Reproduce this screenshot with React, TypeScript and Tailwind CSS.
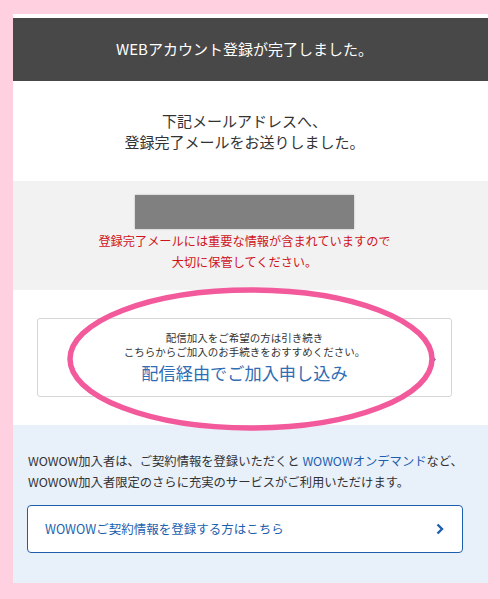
export default function App() {
  const jp = { fontFamily: '"Noto Sans CJK JP", "Noto Sans", sans-serif' };

  return (
    <div className="relative min-h-[599px] w-[500px] bg-[#ffd0df] px-[13px] pt-[14px]" style={jp}>
      <div className="w-[475px] bg-white pt-[4px]">
        {/* header */}
        <div className="flex h-[63px] items-center justify-center bg-[#484848] pr-[12px] text-[15px] text-white">
          WEBアカウント登録が完了しました。
        </div>

        {/* message */}
        <div className="flex h-[100px] flex-col items-center justify-center pr-[12px] text-[15px] leading-[21px] text-[#333]">
          <p>下記メールアドレスへ、</p>
          <p>登録完了メールをお送りしました。</p>
        </div>

        {/* address */}
        <div className="flex h-[109px] flex-col items-center bg-[#f2f2f2] pr-[12px] pt-[14px]">
          <div className="h-[34px] w-[219px] bg-[#808080] shadow-[0_0_2px_rgba(0,0,0,0.25)]" />
          <p className="mt-[2px] text-center text-[12.2px] leading-[21px] text-[#d0121b]">
            登録完了メールには重要な情報が含まれていますので
            <br />
            大切に保管してください。
          </p>
        </div>

        {/* streaming */}
        <div className="h-[135px] pt-[28px]">
          <div className="relative ml-[24px] flex h-[79px] w-[415px] flex-col items-center justify-center rounded-[3px] border border-[#d6d6d6] bg-white">
            <p className="text-center text-[10.5px] leading-[14px] text-[#333]">
              配信加入をご希望の方は引き続き
              <br />
              こちらからご加入のお手続きをおすすめください。
            </p>
            <p className="mt-[2px] text-[17.2px] leading-[24px] text-[#2f6db5]">配信経由でご加入申し込み</p>
            <svg className="absolute right-[15px] top-[36px]" width="6" height="9" viewBox="0 0 6 9">
              <path d="M1 1l3.5 3.5L1 8" fill="none" stroke="#2f6db5" strokeWidth="2" />
            </svg>
          </div>
        </div>

        {/* wowow */}
        <div className="h-[158px] bg-[#e8f0fa] pl-[15px] pt-[26px]">
          <p className="text-[12.3px] leading-[21px] text-[#333]">
            WOWOW加入者は、ご契約情報を登録いただくと <span className="text-[#1d5fae]">WOWOWオンデマンド</span>など、
            <br />
            WOWOW加入者限定のさらに充実のサービスがご利用いただけます。
          </p>
          <button className="-ml-px mt-[12px] flex h-[48px] w-[436px] items-center justify-between rounded-[4px] border border-[#1d5fae] bg-white pl-[17px] pr-[18px] text-[12.5px] text-[#1d5fae]">
            <span>WOWOWご契約情報を登録する方はこちら</span>
            <svg width="8" height="12" viewBox="0 0 8 12">
              <path d="M1.5 1.5L6 6l-4.5 4.5" fill="none" stroke="#1d5fae" strokeWidth="2.4" />
            </svg>
          </button>
        </div>
      </div>

      {/* hand-drawn highlight */}
      <svg className="pointer-events-none absolute left-0 top-0" width="500" height="599" viewBox="0 0 500 599">
        <ellipse cx="251" cy="359" rx="181" ry="69" fill="none" stroke="#f25a9c" strokeWidth="5.5" />
      </svg>
    </div>
  );
}
